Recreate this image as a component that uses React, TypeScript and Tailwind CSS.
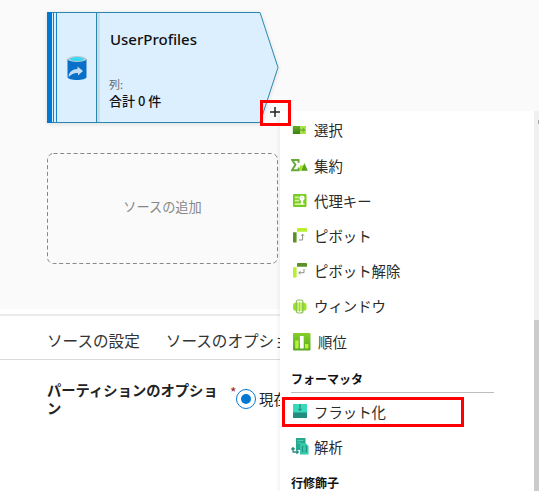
import type { ReactNode } from 'react';

function SelectIcon() {
  return (
    <svg viewBox="0 0 18 18" className="size-[18px]">
      <defs>
        <linearGradient id="selectDark" x1="0" y1="0" x2="0" y2="1"><stop stopColor="#68ad22" /><stop offset="1" stopColor="#3c8114" /></linearGradient>
      </defs>
      <rect x="1.8" y="4" width="7.7" height="8" fill="url(#selectDark)" />
      <rect x="9.5" y="4" width="5.5" height="8" fill="#a6e63c" />
      <path d="M8.5 8h5M11.8 6.3L13.6 8l-1.8 1.7" stroke="#5c9426" fill="none" />
    </svg>
  );
}

function AggregateIcon() {
  return (
    <svg viewBox="0 0 18 18" className="size-[18px]">
      <path d="M7.5 5.8V3H1.2l3.2 4.8L1 13.2h6.7v-2.7" fill="none" stroke="#69a83a" strokeWidth="2" />
      <rect x="9" y="8.5" width="4" height="5.2" fill="#a2e32f" />
      <path d="M13.3 6l3.6 7.8H10.6z" fill="#5aa51d" />
    </svg>
  );
}

function KeyIcon() {
  return (
    <svg viewBox="0 0 18 18" className="size-[18px]">
      <rect x="2" y="2" width="13.5" height="13" rx="1" fill="#78cc24" />
      <path d="M3.8 4.5h4v1.8h-4zM3.8 7.7h4.5v1.8H3.8zM3.8 11.2h9.7V13H3.8z" fill="#d1f698" />
      <circle cx="11" cy="6" r="2.6" fill="#fff" />
      <path d="M9.9 7.5h2.3v4.2l-1.1.9-1.2-.9z" fill="#fff" />
      <circle cx="11" cy="5" r=".5" fill="#74c527" />
    </svg>
  );
}

function PivotIcon({ reverse = false }: { reverse?: boolean }) {
  return (
    <svg viewBox="0 0 18 18" className="size-[18px]">
      <rect x="6" y="1" width="10" height="3.8" rx=".4" fill={reverse ? '#5b9128' : '#b8f02d'} />
      <rect x="2" y="5.2" width="3.6" height="10.3" rx=".4" fill={reverse ? '#b8f02d' : '#5b9128'} />
      {reverse ? (
        <path d="M13 7v3.7H7.8M9.5 9.2l-1.7 1.5 1.7 1.5" fill="none" stroke="#8b8f87" />
      ) : (
        <path d="M8 13h3.6V7.5M10.1 8.8l1.5-1.6 1.5 1.6" fill="none" stroke="#8b8f87" />
      )}
    </svg>
  );
}

function WindowIcon() {
  return (
    <svg viewBox="0 0 18 18" className="size-[18px]">
      <rect x="2" y="4.8" width="13.5" height="8" rx="2.5" fill="#9be526" />
      <path d="M6.3 4.5h4.5v8.7H6.3z" fill="#c3f56b" />
      <rect x="5.3" y="2" width="6.6" height="13" rx="2" fill="none" stroke="#8abf5c" strokeWidth="1.2" />
      <path d="M8.5 4.5v9" stroke="#9bdf36" />
    </svg>
  );
}

function RankIcon() {
  return (
    <svg viewBox="0 0 18 18" className="size-[18px]">
      <defs>
        <linearGradient id="rankGreen" x1="0" y1="0" x2="0" y2="1"><stop stopColor="#85cf2a" /><stop offset="1" stopColor="#59a820" /></linearGradient>
      </defs>
      <rect width="17.5" height="17.5" rx="1" fill="url(#rankGreen)" />
      <path d="M2.2 7.5h3.4v8H2.2zM12 11h3.4v4.5H12z" fill="#b8f23a" />
      <path d="M6.9 3h3.8v12.5H6.9z" fill="#fff" />
    </svg>
  );
}

function FlattenIcon() {
  return (
    <svg viewBox="0 0 18 18" className="size-[18px]">
      <rect x="2" y="1" width="14" height="14" rx=".7" fill="#38dabb" />
      <path d="M2 9.5h14v4.8q0 .7-.7.7H2.7q-.7 0-.7-.7z" fill="#218c80" />
      <path d="M9 1v6.3M7.3 5.8L9 7.6l1.7-1.8" fill="none" stroke="#217b70" />
    </svg>
  );
}

function ParseIcon() {
  return (
    <svg viewBox="0 0 18 18" className="size-[18px]">
      <rect x="5" y="0" width="9.5" height="12" fill="#25a98f" />
      <path d="M6.5 2.5h6M6.5 5h3" stroke="#52cdb6" />
      <path d="M9 5h5.5L17.5 8v8.5H9z" fill="#35c9ac" />
      <path d="M2 14.5v-4M.4 11.5L2 9.7l1.6 1.8M2 14h5M5.5 12.3L7.2 14l-1.7 1.7" fill="none" stroke="#258a7b" strokeWidth="1.3" />
      <path d="M12.4 8.5h-1v5h1M14.4 8.5h1v5h-1" fill="none" stroke="#207f72" strokeWidth=".8" />
    </svg>
  );
}

function MenuItem({ icon, label, wide = false }: { icon: ReactNode; label: string; wide?: boolean }) {
  return (
    <div className="flex h-[35.2px] shrink-0 items-center pl-[11px]">
      {wide && <span className="w-[2px]" />}
      {icon}
      <span className={`${wide ? 'ml-[7px]' : 'ml-[5px]'} text-[14.4px] leading-none whitespace-nowrap text-[#2a2a2a]`}>{label}</span>
    </div>
  );
}

function SourceCard() {
  return (
    <div className="relative h-[112px] w-[232px]">
      <svg className="absolute inset-0 h-full w-full drop-shadow-[0_1px_2px_rgba(0,0,0,0.12)]" viewBox="0 0 232 112">
        <path d="M.5.5h212.5l18 55-18 55H.5z" fill="#dbefff" stroke="#2b88ad" />
        <path d="M0 0h5v111H0z" fill="#0078d4" />
        <path d="M6.5 1v109M9.5 1v109" stroke="#1683cf" />
        <path d="M49.5 1v109" stroke="#2b88ad" />
        <path d="M51.5 1v109" stroke="#cbdce9" strokeWidth="3" />
      </svg>
      <div className="relative flex h-full">
        <div className="flex w-[60px] items-center justify-center">
          <svg viewBox="0 0 20 24" className="h-6 w-5">
            <path d="M.5 3v18c0 4 19 4 19 0V3z" fill="#096fc8" />
            <ellipse cx="10" cy="3" rx="9.5" ry="3" fill="#b8c8d4" />
            <ellipse cx="10" cy="3.1" rx="7" ry="2" fill="#38d9ee" />
            <path d="M1.5 21c.3-5 4-8 9-8v-2.5l5.5 4.5-5 4.5V17c-4-.3-6 1-9.5 4z" fill="#c4dff5" />
          </svg>
        </div>
        <div className="flex flex-col pt-[16px] pl-[3px]">
          <div className="h-[22px] font-['Noto_Sans'] text-[15px] leading-[22px] font-medium text-[#111]">UserProfiles</div>
          <div className="mt-[26px] -ml-px text-[11px] leading-[16px] text-[#666]">列:</div>
          <div className="-ml-px text-[13px] leading-[17px] font-medium whitespace-nowrap text-[#111]">合計 0 件</div>
        </div>
      </div>
    </div>
  );
}

function TransformMenu() {
  return (
    <div className="absolute top-[111px] left-[280px] flex h-[380px] w-[259px] bg-white shadow-[-2px_3px_3px_rgba(0,0,0,0.05)]">
      <div className="flex w-[254px] flex-col overflow-hidden pt-[2px]">
        <MenuItem icon={<SelectIcon />} label="選択" />
        <MenuItem icon={<AggregateIcon />} label="集約" />
        <MenuItem icon={<KeyIcon />} label="代理キー" />
        <MenuItem icon={<PivotIcon />} label="ピボット" />
        <MenuItem icon={<PivotIcon reverse />} label="ピボット解除" />
        <MenuItem icon={<WindowIcon />} label="ウィンドウ" />
        <MenuItem icon={<RankIcon />} label="順位" wide />
        <div className="ml-[11px] flex h-[34px] w-[203px] shrink-0 items-center border-b border-[#bdbdbd] pt-[6px] text-[12px] font-bold text-[#111]">フォーマッタ</div>
        <div className="mt-[4px] ml-[2px] h-[30px] w-[182px] shrink-0 border-[3px] border-[#f00]">
          <div className="-mt-[6px] -ml-[5px]"><MenuItem icon={<FlattenIcon />} label="フラット化" /></div>
        </div>
        <div className="mt-[2px] shrink-0"><MenuItem icon={<ParseIcon />} label="解析" /></div>
        <div className="mt-[8px] ml-[11px] shrink-0 text-[12px] leading-[20px] font-bold text-[#111]">行修飾子</div>
      </div>
      <div className="flex w-[5px] flex-col bg-[#f0f0f0]">
        <div className="mt-[9px] ml-[4px] h-[4px] w-px bg-[#aaa]" />
        <div className="mt-auto h-[171px] bg-[#cbcbcb]" />
      </div>
    </div>
  );
}

export default function App() {
  return (
    <main className="relative h-[491px] w-[539px] overflow-hidden bg-white font-['Noto_Sans_CJK_JP',sans-serif]">
      <section className="h-[309px] bg-[#fafafa] pt-[12px] pl-[47px]">
        <SourceCard />
        <div className="mt-[28px] flex h-[112px] w-[231px] items-center justify-center">
          <svg className="absolute h-[112px] w-[231px]" viewBox="0 0 231 112">
            <rect x=".5" y="1.5" width="230" height="110" rx="6" fill="none" stroke="#888" strokeDasharray="4 2.7" />
          </svg>
          <span className="-mt-[2px] text-[13.2px] text-[#888]">ソースの追加</span>
        </div>
      </section>
      <section>
        <div className="mt-[5px] flex h-[46px] items-center gap-[26px] border-t-2 border-b border-t-[#ebebeb] border-b-[#dadada] pt-[6px] pl-[47px] text-[15.6px] whitespace-nowrap text-[#333]">
          <span>ソースの設定</span>
          <span>ソースのオプション</span>
        </div>
        <div className="flex pt-[21px] pl-[47px]">
          <div className="w-[183px] text-[14.3px] leading-[18px] font-bold text-[#222]">パーティションのオプショ<br />ン</div>
          <span className="mt-px w-[6px] text-[14px] leading-[20px] text-[#a4262c]">*</span>
          <span className="mt-[8px] flex size-[20px] shrink-0 items-center justify-center rounded-full border border-[#0078d4]">
            <span className="size-[10px] rounded-full bg-[#0078d4]" />
          </span>
          <span className="mt-[8px] ml-[3px] text-[14.4px] leading-[20px] whitespace-nowrap text-[#222]">現在</span>
        </div>
      </section>
      <TransformMenu />
      <div className="absolute top-[100px] left-[260px] flex h-[26px] w-[31px] items-center justify-center border-[3px] border-[#f00] pr-[2px] pb-[2px]">
        <svg viewBox="0 0 12 12" className="size-[12px]"><path d="M6 1v10M1 6h10" stroke="#222" strokeWidth="1.5" /></svg>
      </div>
    </main>
  );
}
